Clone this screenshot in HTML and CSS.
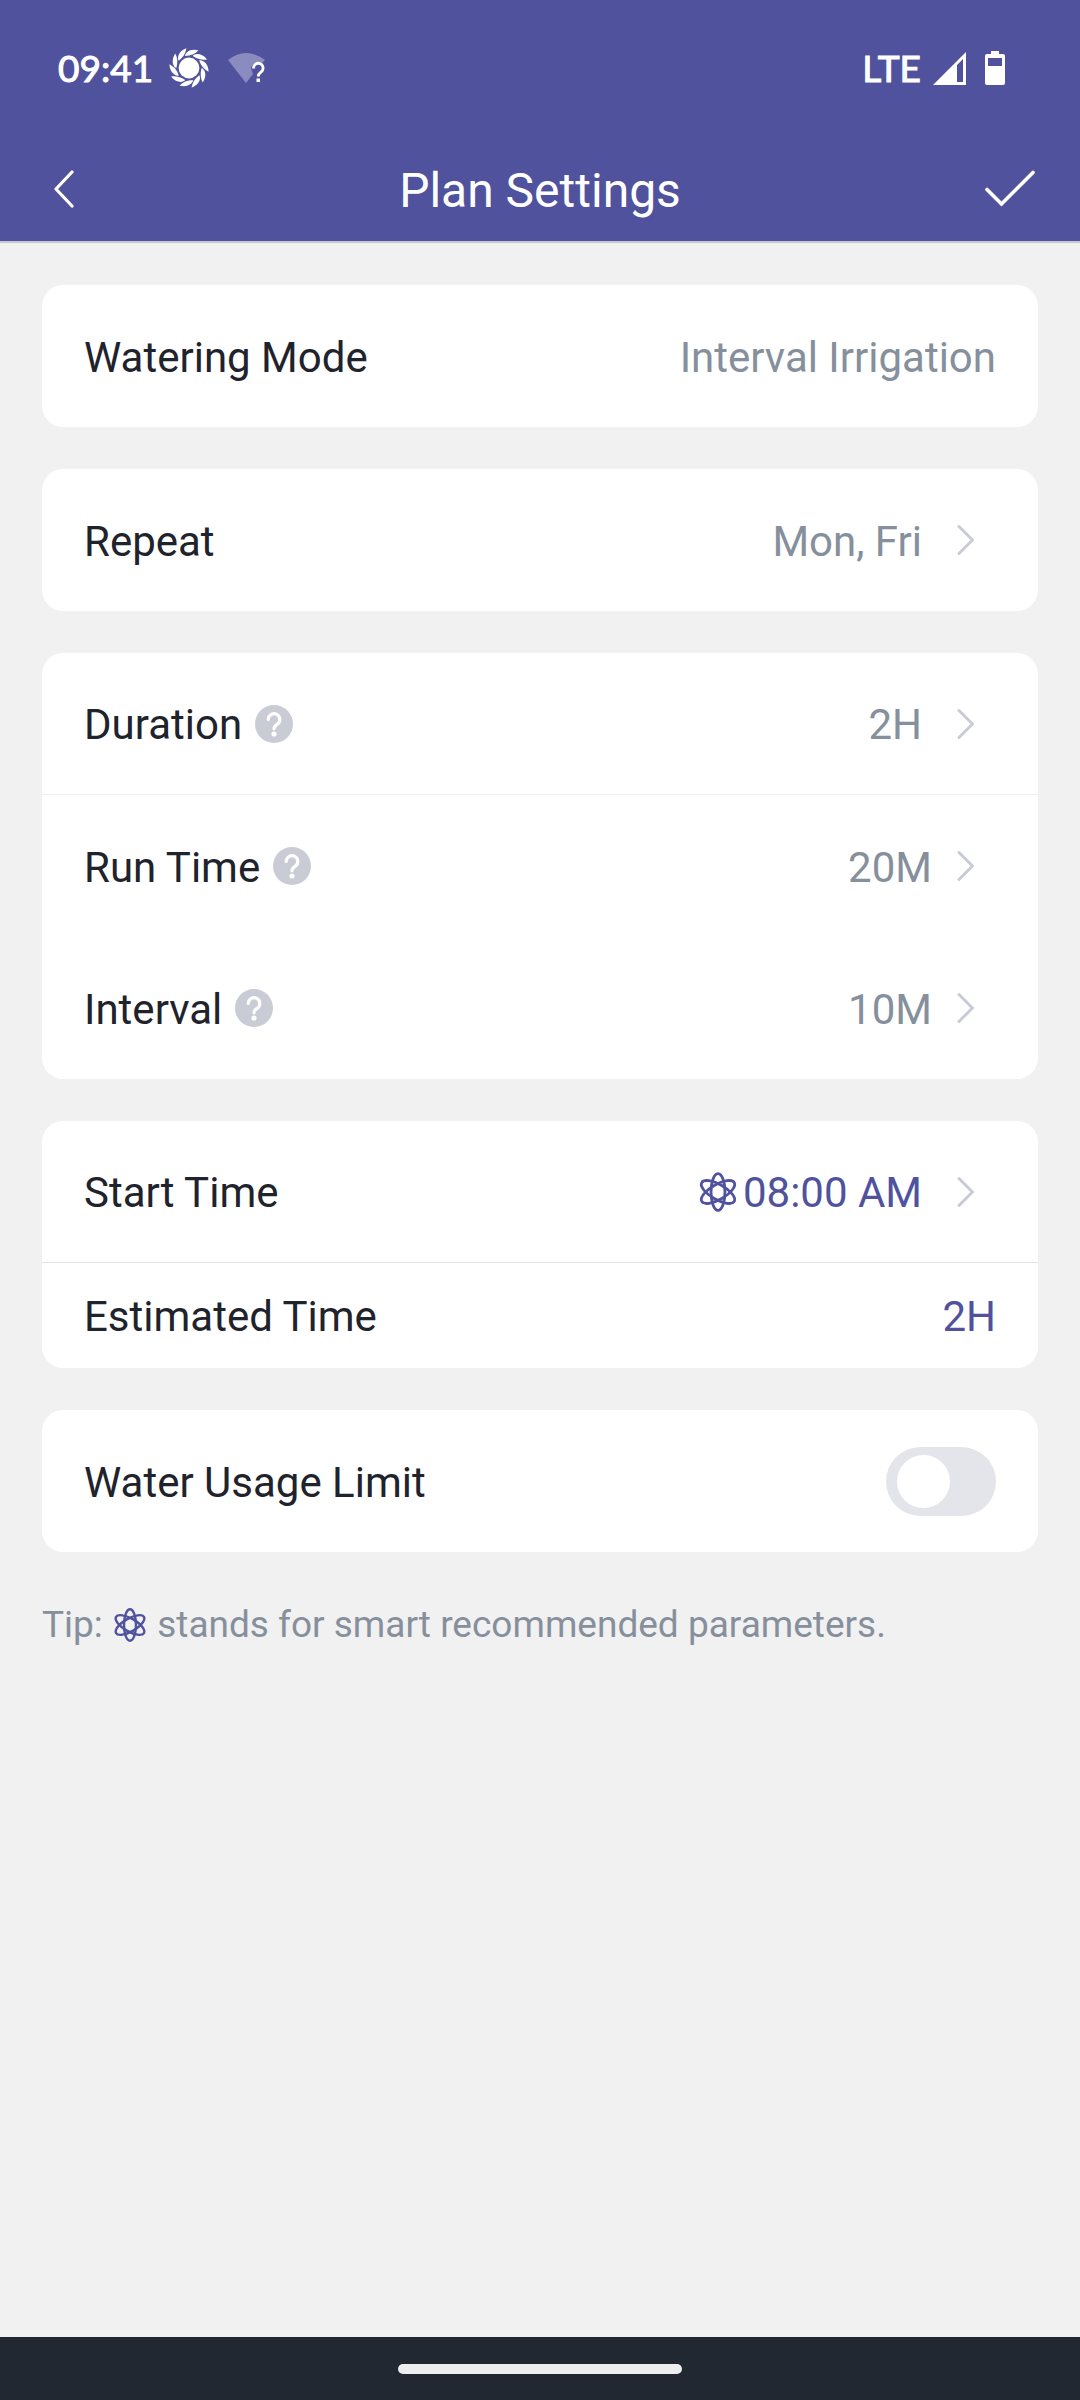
FILE: index.html
```html
<!DOCTYPE html>
<html lang="en">
<head>
    <meta charset="UTF-8">
    <meta name="viewport" content="width=device-width, initial-scale=1.0">

    <title>Plan Settings</title>
    <link rel="stylesheet" href="styles.css">
</head>
<body>
    <!-- shared icons -->
    <svg class="defs" aria-hidden="true">
        <symbol id="smart" viewBox="0 0 42 42">
            <g fill="none" stroke="#50529d" stroke-width="2.8">
                <ellipse cx="21" cy="21" rx="7" ry="18.4"/>
                <ellipse cx="21" cy="21" rx="7.6" ry="18.8" transform="rotate(60 21 21)"/>
                <ellipse cx="21" cy="21" rx="7.6" ry="18.8" transform="rotate(-60 21 21)"/>
            </g>
        </symbol>
        <symbol id="help" viewBox="0 0 38 38">
            <circle cx="19" cy="19" r="19" fill="#c9ccd5"/>
            <path d="M13.2 14.500a5.800 5.800 0 1 1 8.900 4.900c-2 1.400-3.100 2-3.100 4.400" fill="none" stroke="#fff" stroke-width="3.200" stroke-linecap="round"/>
            <circle cx="19" cy="29" r="2.600" fill="#fff"/>
        </symbol>
        <symbol id="chevron" viewBox="0 0 20 32">
            <path d="M3 2.500l13.500 13.500L3 29.500" fill="none" stroke="#c9ccd5" stroke-width="3" stroke-linecap="round" stroke-linejoin="round"/>
        </symbol>
        <path id="petal" d="M-4 -12C-4 -15 1 -20 9.500 -17.500C6 -14 2 -12.200 -4 -12Z"/>
    </svg>

    <header class="top">
        <div class="status-bar">
            <span>09:41</span>
            <svg class="status-flower" viewBox="-20 -20 40 40" fill="#fff">
                <circle r="10.400"/>
                <use href="#petal"/>
                <use href="#petal" transform="rotate(36)"/>
                <use href="#petal" transform="rotate(72)"/>
                <use href="#petal" transform="rotate(108)"/>
                <use href="#petal" transform="rotate(144)"/>
                <use href="#petal" transform="rotate(180)"/>
                <use href="#petal" transform="rotate(216)"/>
                <use href="#petal" transform="rotate(252)"/>
                <use href="#petal" transform="rotate(288)"/>
                <use href="#petal" transform="rotate(324)"/>
            </svg>
            <svg class="status-wifi" viewBox="0 0 40 32">
                <path d="M1 8Q19 -6 38 8L34 12Q26 9 24 16L26 22L19 31Z" fill="#8a8bbe"/>
                <path d="M26.500 16.500a4.800 4.800 0 1 1 7.600 3.500c-2 1.500-2.800 2-2.800 4.500" fill="none" stroke="#fff" stroke-width="2.800"/>
                <rect x="29.500" y="26.500" width="3.500" height="3.500" fill="#fff"/>
            </svg>
            <span class="network">LTE</span>
            <svg class="status-signal" viewBox="0 0 33 33">
                <path d="M0 33L33 0V33ZM24 13V30H30V7Z" fill="#fff" fill-rule="evenodd"/>
            </svg>
            <svg class="status-battery" viewBox="0 0 20 34">
                <path d="M6 0H14V3H18Q20 3 20 5V32Q20 34 18 34H2Q0 34 0 32V5Q0 3 2 3H6ZM3 7V15H17V7Z" fill="#fff" fill-rule="evenodd"/>
            </svg>
        </div>
        <div class="title-bar">
            <button class="icon-button back" aria-label="Back">
                <svg class="icon-back" viewBox="0 0 24 38"><path d="M20 2L4 19L20 36" fill="none" stroke="#fff" stroke-width="3.200" stroke-linecap="round" stroke-linejoin="round"/></svg>
            </button>
            <h1>Plan Settings</h1>
            <button class="icon-button" aria-label="Save">
                <svg class="icon-check" viewBox="0 0 52 38"><path d="M3 19.500L17.500 34L49 2.500" fill="none" stroke="#fff" stroke-width="3.600" stroke-linecap="round"/></svg>
            </button>
        </div>
    </header>

    <main>
        <section class="card">
            <div class="row">
                <span class="text">Watering Mode</span>
                <span class="text value">Interval Irrigation</span>
            </div>
        </section>

        <section class="card">
            <div class="row">
                <span class="text">Repeat</span>
                <button class="value link"><span class="text">Mon, Fri</span><svg class="chevron"><use href="#chevron"/></svg></button>
            </div>
        </section>

        <section class="card">
            <div class="row line-light">
                <span class="text">Duration</span>
                <button class="help" aria-label="About duration"><svg><use href="#help"/></svg></button>
                <button class="value link"><span class="text">2H</span><svg class="chevron"><use href="#chevron"/></svg></button>
            </div>
            <div class="row">
                <span class="text">Run Time</span>
                <button class="help" aria-label="About run time"><svg><use href="#help"/></svg></button>
                <button class="value link near"><span class="text">20M</span><svg class="chevron"><use href="#chevron"/></svg></button>
            </div>
            <div class="row">
                <span class="text">Interval</span>
                <button class="help" aria-label="About interval"><svg><use href="#help"/></svg></button>
                <button class="value link near"><span class="text">10M</span><svg class="chevron"><use href="#chevron"/></svg></button>
            </div>
        </section>

        <section class="card">
            <div class="row line">
                <span class="text">Start Time</span>
                <button class="value link accent">
                    <span class="smart-time"><svg class="smart"><use href="#smart"/></svg><span class="text">08:00 AM</span></span>
                    <svg class="chevron"><use href="#chevron"/></svg>
                </button>
            </div>
            <div class="row short">
                <span class="text">Estimated Time</span>
                <span class="text value accent">2H</span>
            </div>
        </section>

        <section class="card">
            <div class="row">
                <label for="limit" class="text">Water Usage Limit</label>
                <input type="checkbox" id="limit" class="switch" role="switch">
            </div>
        </section>

        <p class="tip">Tip: <svg class="smart-small"><use href="#smart"/></svg> stands for smart recommended parameters.</p>
    </main>

    <footer class="nav-bar">
        <div class="nav-pill"></div>
    </footer>
</body>
</html>
```
FILE: styles.css
```css
* {
    box-sizing: border-box;
}
body {
    margin: 0;
    min-height: 100vh;
    display: flex;
    flex-direction: column;
    background-color: #f1f1f2;
    color: #1f232c;
    font-family: Roboto, sans-serif;
    font-size: 42px;
    line-height: 50px;
}
button {
    padding: 0;
    border: none;
    background: none;
    color: inherit;
    font: inherit;
    cursor: pointer;
}
svg {
    display: block;
}
.defs {
    position: absolute;
    width: 0;
    height: 0;
}

/* header */
.top {
    background-color: #50529d;
    border-bottom: 2px solid #c8c8d0;
    color: white;
}
.status-bar {
    display: flex;
    align-items: center;
    height: 136px;
    padding: 0 75px 0 58px;
    font-family: Lato, sans-serif;
    font-size: 37px;
    -webkit-text-stroke: 1px white;
}
.status-flower {
    width: 40px;
    height: 40px;
    margin-left: 16px;
}
.status-wifi {
    width: 40px;
    height: 32px;
    margin-left: 18px;
}
.network {
    margin-left: auto;
}
.status-signal {
    width: 33px;
    height: 33px;
    margin-left: 12px;
}
.status-battery {
    width: 20px;
    height: 34px;
    margin-left: 19px;
}
.title-bar {
    display: flex;
    align-items: center;
    justify-content: space-between;
    height: 105px;
    padding: 0 44px;
}
.icon-button {
    width: 52px;
}
.back {
    padding-left: 8px;
}
.icon-back {
    width: 24px;
    height: 38px;
}
.icon-check {
    width: 52px;
    height: 38px;
}
h1 {
    margin: 0;
    padding-top: 4px;
    font-size: 48px;
    font-weight: 400;
}

/* settings */
main {
    flex: 1;
    padding: 42px;
}
.card {
    margin-bottom: 42px;
    border-radius: 21px;
    background-color: white;
}
.row {
    display: flex;
    align-items: center;
    min-height: 142px;
    padding: 0 42px;
}
.short {
    min-height: 105px;
}
.line {
    border-bottom: 1px solid #e3e4ea;
}
.line-light {
    border-bottom: 1px solid #f1f1f2;
}
.text {
    padding-top: 3px;
}
.value {
    margin-left: auto;
    color: #868f9c;
}
.link {
    display: flex;
    align-items: center;
    gap: 34px;
    padding-right: 20px;
}
.near {
    gap: 24px;
}
.accent {
    color: #50529d;
}
.chevron {
    width: 20px;
    height: 32px;
}
.help {
    margin-left: 13px;
}
.help svg {
    width: 38px;
    height: 38px;
}
.smart-time {
    display: flex;
    align-items: center;
    gap: 4px;
}
.smart {
    width: 42px;
    height: 42px;
}
.switch {
    appearance: none;
    width: 110px;
    height: 69px;
    margin: 0 0 0 auto;
    padding: 8px 11px;
    border-radius: 35px;
    background-color: #e4e5eb;
    cursor: pointer;
}
.switch::before {
    content: "";
    display: block;
    width: 53px;
    height: 53px;
    border-radius: 50%;
    background-color: white;
}
.switch:checked {
    background-color: #50529d;
}
.switch:checked::before {
    margin-left: auto;
}
.tip {
    margin: 0;
    padding-top: 6px;
    color: #868f9c;
    font-size: 37px;
}
.smart-small {
    display: inline-block;
    width: 36px;
    height: 36px;
    vertical-align: -6px;
}

/* system navigation */
.nav-bar {
    display: flex;
    align-items: center;
    justify-content: center;
    height: 63px;
    background-color: #222831;
}
.nav-pill {
    width: 284px;
    height: 10px;
    border-radius: 5px;
    background-color: #eee;
}
```
